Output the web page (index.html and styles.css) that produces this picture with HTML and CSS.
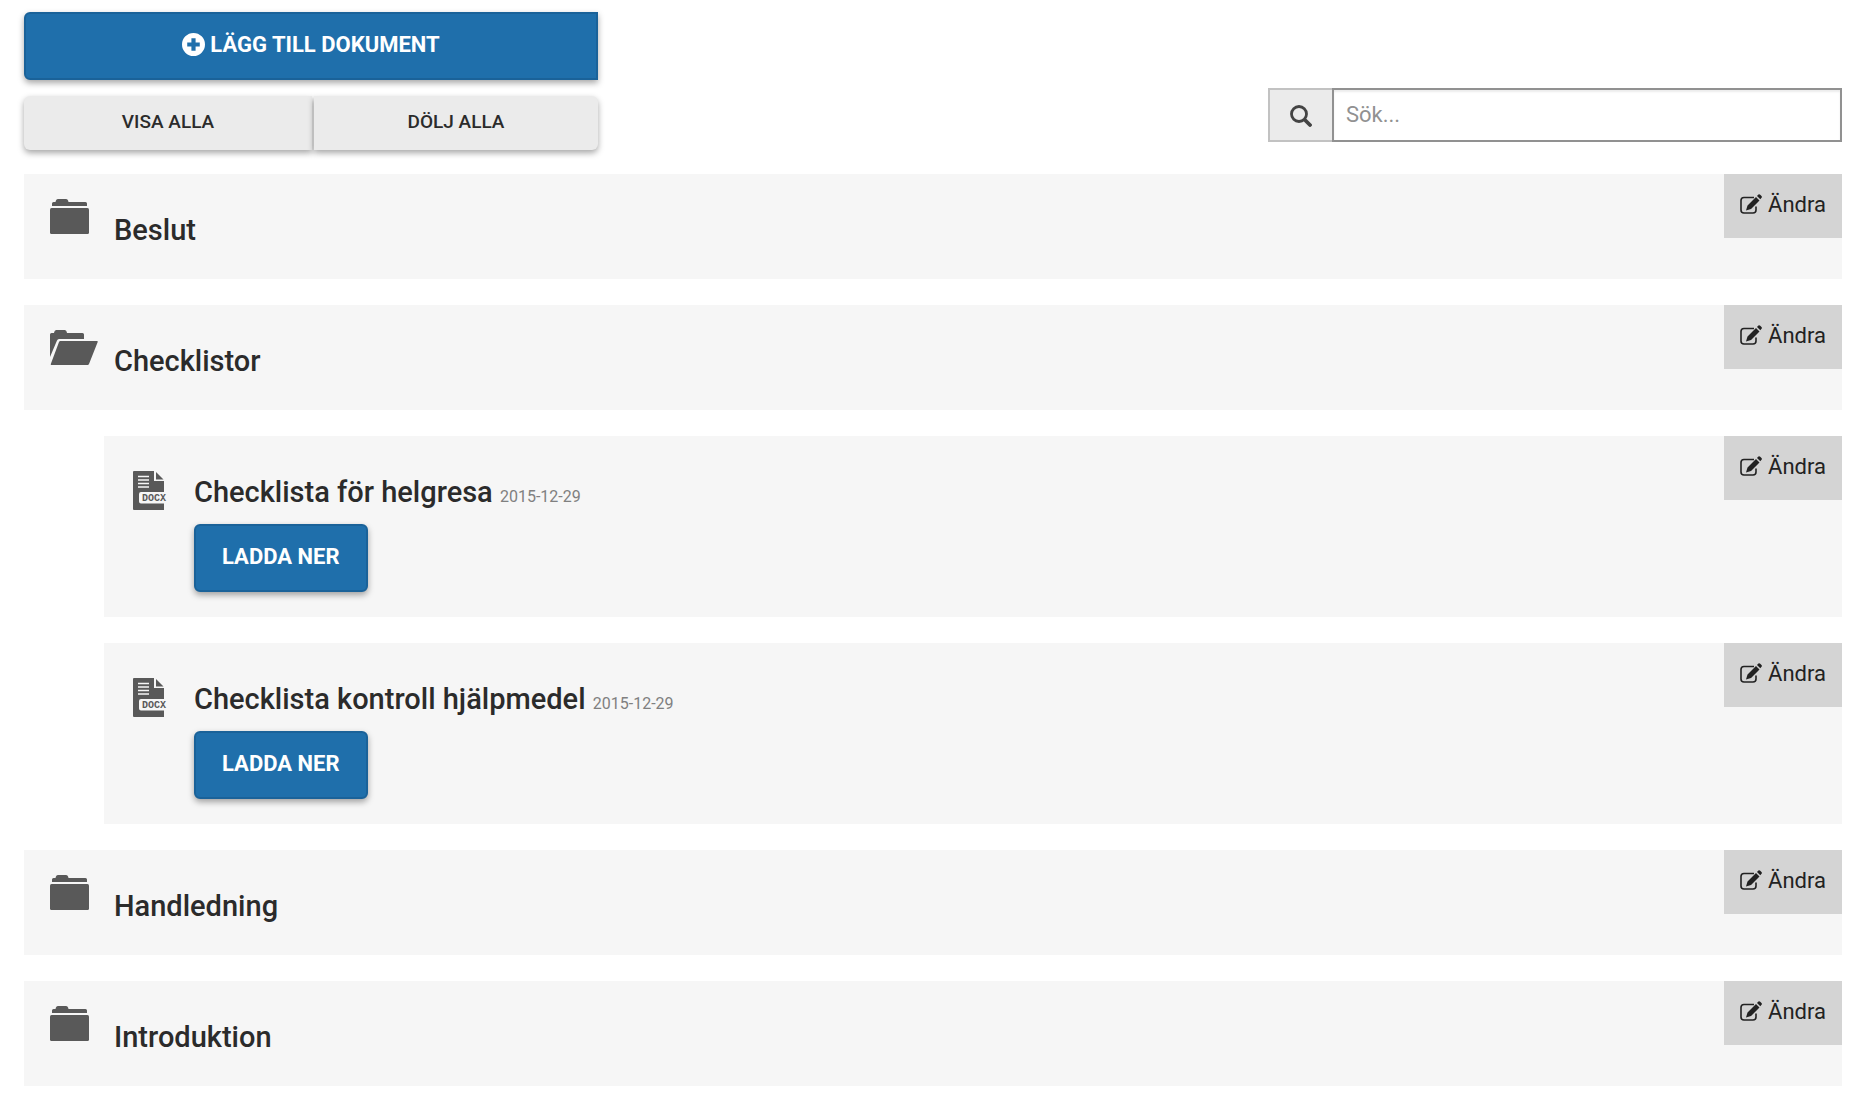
FILE: index.html
```
<!DOCTYPE html>
<html lang="sv">
<head>
<meta charset="UTF-8" />
<meta name="viewport" content="width=device-width, initial-scale=1.0" />
<title>Dokument</title>
<link rel="stylesheet" href="styles.css">
</head>
<body>
  <!-- Shared icons -->
  <svg class="sprite" aria-hidden="true">
    <symbol id="i-folder" viewBox="0 0 39 36">
      <path d="M2 8V5.500Q2 4 3.500 4H5.500Q6 1 8 1H16Q18 1 18.500 4H35.500Q37 4 37 5.500V8Z"/>
      <path d="M1.500 10H37.500Q39 10 39 11.500V34.500Q39 36 37.500 36H1.500Q0 36 0 34.500V11.500Q0 10 1.500 10Z"/>
    </symbol>
    <symbol id="i-folder-open" viewBox="0 0 48 36">
      <path d="M0 28V5.500Q0 4 1.500 4H4Q4.500 1 6.500 1H14.500Q16.500 1 17 4H32.500Q34 4 34 5.500V10H9Q7.500 10 7 11.500Z"/>
      <path d="M10.500 12H47Q48 12 47.700 13L39 35Q38.600 36 37.500 36H1.500Q.4 36 .8 35L9 13Q9.400 12 10.500 12Z"/>
    </symbol>
    <symbol id="i-edit" viewBox="0 0 22 20">
      <path d="M14 3.500H4Q1 3.500 1 6.500V16Q1 19 4 19H13Q16 19 16 16V12.500" fill="none" stroke="currentColor" stroke-width="1.600"/>
      <path d="M6 16.500L7.500 11.500L16 3L19.500 6.500L11 15ZM17 2L18.400.6Q19.300 -.2 20.200.7L21.500 2Q22.300 2.900 21.500 3.800L20.300 5.300Z"/>
    </symbol>
    <symbol id="i-docx" viewBox="0 0 36 39">
      <path d="M1 0H21V10H31V21H8Q6 21 6 23V30.500Q6 32.500 8 32.500H31V39H1Q0 39 0 38V1Q0 0 1 0Z"/>
      <path d="M23 1L30.500 8.500H23Z"/>
      <path d="M5 5.500H16M5 9H16M5 12.500H16M5 16H16" stroke="#f6f6f6" stroke-width="1.500"/>
      <text class="docx-label" x="9" y="30">DOCX</text>
    </symbol>
  </svg>

  <div class="toolbar">
    <div class="actions">
      <button type="button" class="btn btn-primary btn-add">
        <svg class="icon-plus" viewBox="0 0 22 22"><path fill-rule="evenodd" d="M11 0A11 11 0 1 0 11 22A11 11 0 1 0 11 0ZM9 5H13V9H17V13H13V17H9V13H5V9H9Z"/></svg>
        Lägg till dokument
      </button>
      <div class="btn-group">
        <button type="button" class="btn btn-default">Visa alla</button>
        <button type="button" class="btn btn-default">Dölj alla</button>
      </div>
    </div>
    <form class="search">
      <label class="search-addon" for="search" aria-label="Sök">
        <svg class="icon-search" viewBox="0 0 22 22"><circle cx="9" cy="9" r="7.500" fill="none" stroke="currentColor" stroke-width="2.800"/><path d="M15 15L20 20" stroke="currentColor" stroke-width="3.800" stroke-linecap="round"/></svg>
      </label>
      <input type="text" id="search" class="search-input" placeholder="Sök...">
    </form>
  </div>

  <div class="documents">
    <div class="item">
      <svg class="icon-folder"><use href="#i-folder"/></svg>
      <h2 class="title">Beslut</h2>
      <button type="button" class="btn-edit"><svg class="icon-edit"><use href="#i-edit"/></svg>Ändra</button>
    </div>

    <div class="item">
      <svg class="icon-folder icon-folder-open"><use href="#i-folder-open"/></svg>
      <h2 class="title">Checklistor</h2>
      <button type="button" class="btn-edit"><svg class="icon-edit"><use href="#i-edit"/></svg>Ändra</button>
    </div>

    <div class="item file">
      <svg class="icon-docx"><use href="#i-docx"/></svg>
      <div class="file-body">
        <h3 class="title">Checklista för helgresa <small>2015-12-29</small></h3>
        <button type="button" class="btn btn-primary">Ladda ner</button>
      </div>
      <button type="button" class="btn-edit"><svg class="icon-edit"><use href="#i-edit"/></svg>Ändra</button>
    </div>

    <div class="item file">
      <svg class="icon-docx"><use href="#i-docx"/></svg>
      <div class="file-body">
        <h3 class="title">Checklista kontroll hjälpmedel <small>2015-12-29</small></h3>
        <button type="button" class="btn btn-primary">Ladda ner</button>
      </div>
      <button type="button" class="btn-edit"><svg class="icon-edit"><use href="#i-edit"/></svg>Ändra</button>
    </div>

    <div class="item">
      <svg class="icon-folder"><use href="#i-folder"/></svg>
      <h2 class="title">Handledning</h2>
      <button type="button" class="btn-edit"><svg class="icon-edit"><use href="#i-edit"/></svg>Ändra</button>
    </div>

    <div class="item">
      <svg class="icon-folder"><use href="#i-folder"/></svg>
      <h2 class="title">Introduktion</h2>
      <button type="button" class="btn-edit"><svg class="icon-edit"><use href="#i-edit"/></svg>Ändra</button>
    </div>
  </div>
</body>
</html>
```
FILE: styles.css
```
* {
  box-sizing: border-box;
}
body {
  margin: 0;
  padding: 12px 18px 22px 24px;
  background: #fff;
  color: #2b2b2b;
  font-family: Roboto, "Helvetica Neue", Arial, sans-serif;
  font-size: 22px;
}
button,
input {
  font-family: inherit;
}
svg {
  fill: currentColor;
  flex: none;
}
.sprite {
  display: none;
}

/* Toolbar */
.toolbar {
  display: flex;
  justify-content: space-between;
  align-items: flex-end;
  margin-bottom: 24px;
}
.actions {
  display: flex;
  flex-direction: column;
  gap: 16px;
  width: 574px;
}
.btn-group {
  display: flex;
  gap: 2px;
}

/* Buttons */
.btn {
  display: flex;
  align-items: center;
  justify-content: center;
  border: 0;
  border-radius: 6px;
  font-weight: 500;
  text-transform: uppercase;
  box-shadow: 0 3px 6px rgba(0, 0, 0, 0.35);
  cursor: pointer;
}
.btn-primary {
  height: 68px;
  padding: 0 26px 4px;
  border: 2px solid #1a6299;
  background: #1f6fab;
  color: #fff;
  font-size: 22px;
  font-weight: 700;
}
.btn-add {
  gap: 5px;
  border-radius: 6px 0 0 6px;
}
.btn-default {
  flex: 1;
  height: 54px;
  padding: 0 0 4px;
  background: #ebebeb;
  color: #2b2b2b;
  font-size: 19px;
}
.btn-default:first-child {
  flex-basis: 4px;
  border-radius: 6px 0 0 6px;
}
.btn-default:last-child {
  border-radius: 0 6px 6px 0;
}
.icon-plus {
  width: 23px;
  height: 23px;
}

/* Search */
.search {
  display: flex;
  width: 574px;
  height: 54px;
  margin-bottom: 8px;
}
.search-addon {
  display: flex;
  align-items: center;
  justify-content: center;
  width: 64px;
  padding-top: 2px;
  border: 2px solid #c2c2c2;
  border-right: 0;
  background: #ebebeb;
  color: #444;
}
.icon-search {
  width: 22px;
  height: 22px;
}
.search-input {
  flex: 1;
  min-width: 0;
  padding: 0 12px 2px;
  border: 2px solid #919191;
  border-radius: 0;
  box-shadow: inset 0 2px 2px rgba(0, 0, 0, 0.08);
  font-size: 22px;
}
.search-input::placeholder {
  color: #919191;
}

/* Document list */
.documents {
  display: flex;
  flex-direction: column;
  gap: 26px;
}
.item {
  display: flex;
  align-items: flex-start;
  min-height: 105px;
  padding-left: 26px;
  background: #f6f6f6;
}
.file {
  margin-left: 80px;
  padding-left: 29px;
  padding-bottom: 25px;
}
.title {
  flex: 1;
  margin: 40px 0 0;
  font-size: 29px;
  font-weight: 500;
  line-height: 32px;
}
.title small {
  color: #808080;
  font-size: 16px;
  font-weight: 400;
}
.file-body {
  flex: 1;
}
.file-body .btn {
  margin-top: 11px;
}
.icon-folder {
  width: 39px;
  height: 36px;
  margin: 24px 25px 0 0;
  color: #595959;
}
.icon-folder-open {
  width: 48px;
  margin-right: 16px;
}
.icon-docx {
  width: 36px;
  height: 39px;
  margin: 35px 25px 0 0;
  color: #595959;
}
.docx-label {
  font: bold 10px "Liberation Mono", monospace;
}

.btn-edit {
  display: flex;
  align-items: center;
  gap: 6px;
  height: 64px;
  padding: 0 16px 4px;
  border: 0;
  background: #d4d4d4;
  color: #222;
  font-size: 22px;
  cursor: pointer;
}
.icon-edit {
  width: 22px;
  height: 20px;
}
```
